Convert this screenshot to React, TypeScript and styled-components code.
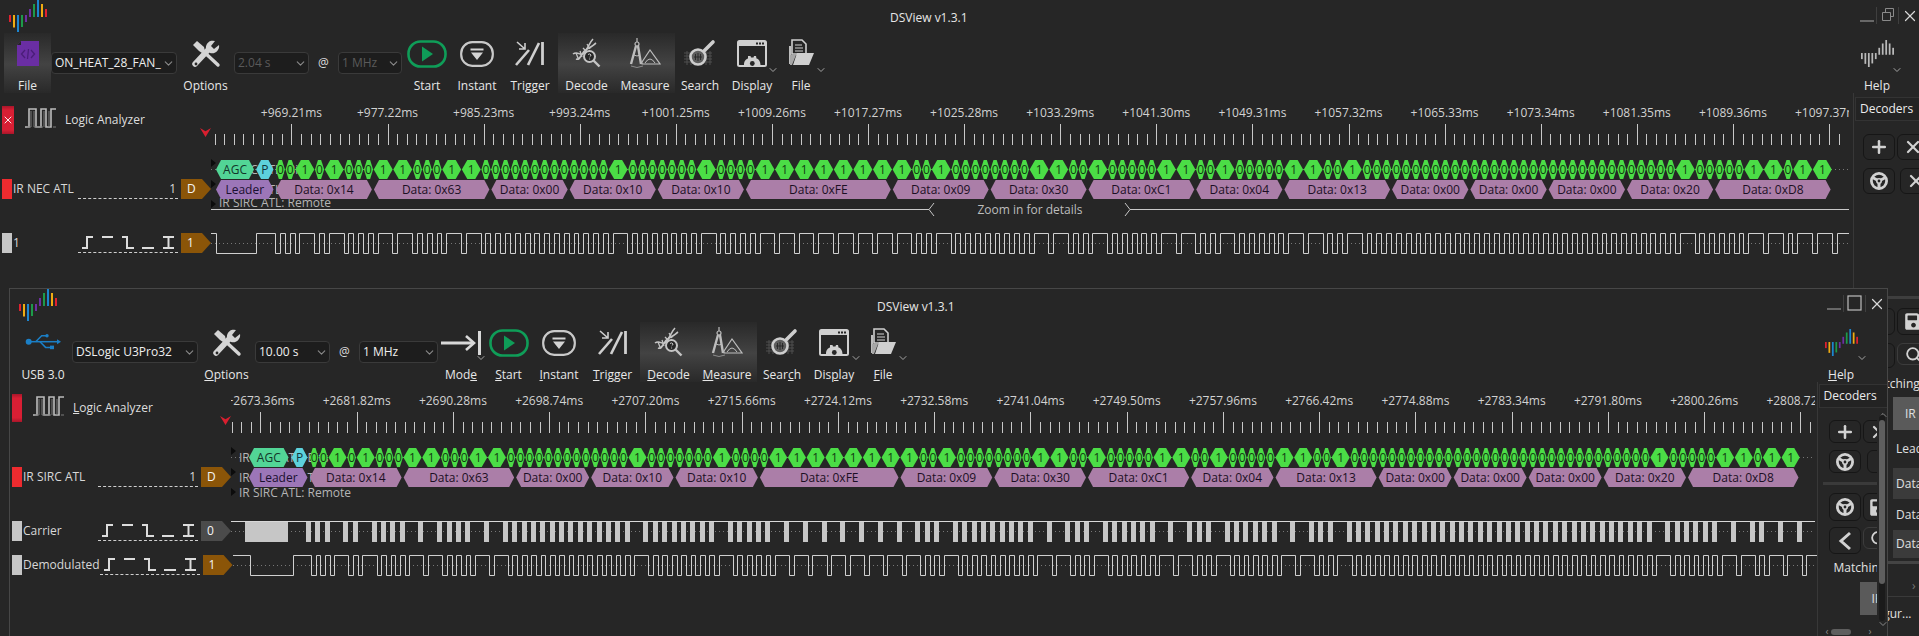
import { Fragment, type ReactNode } from 'react'
import styled, { createGlobalStyle } from 'styled-components'
import { FaSave } from 'react-icons/fa'
import { ChevronDown, Plus, Search as SearchGlass, X } from 'lucide-react'

const BG = '#262626'
const FONT = '"Open Sans", "Noto Sans", "Liberation Sans", sans-serif'

const BYTES = [0x14, 0x63, 0x00, 0x10, 0x10, 0xfe, 0x09, 0x30, 0xc1, 0x04, 0x13, 0x00, 0x00, 0x00, 0x20, 0xd8]

const hexName = (b: number) => `Data: 0x${b.toString(16).toUpperCase().padStart(2, '0')}`

type Bit = { x: number; w: number; v: number }
type Seg = { x: number; w: number; b: number }

function layout(start: number, w0: number) {
  const bits: Bit[] = []
  const segs: Seg[] = []
  let x = start
  for (const b of BYTES) {
    const s = x
    for (let i = 0; i < 8; i++) {
      const v = (b >> i) & 1
      const w = v ? w0 * 2 : w0
      bits.push({ x, w, v })
      x += w
    }
    segs.push({ x: s, w: x - s, b })
  }
  return { bits, segs, end: x }
}

type Timing = {
  origin: number
  right: number
  lowStart: number
  lowEnd: number
  agc: [number, number]
  p: [number, number]
  bitStart: number
  w0: number
}

const lowSpans = (t: Timing): [number, number][] => {
  const { bits, end } = layout(t.bitStart, t.w0)
  const spans: [number, number][] = [[t.lowStart, t.lowEnd]]
  for (const b of bits) spans.push([b.x - 0.5, b.x - 0.5 + t.w0 / 2])
  spans.push([end - 0.5, end - 0.5 + t.w0 / 2])
  return spans
}

const px = (v: number) => Math.round(v) + 0.5

function wavePath(t: Timing) {
  let d = `M0 0.5`
  for (const [a, b] of lowSpans(t)) {
    d += `H${px(a - t.origin)}V20.5H${px(b - t.origin)}V0.5`
  }
  return d + `H${t.right - t.origin}`
}

const hexPts = (x0: number, x1: number, y0: number, y1: number, ins: number) => {
  const m = (y0 + y1) / 2
  return `${x0},${m} ${x0 + ins},${y0} ${x1 - ins},${y0} ${x1},${m} ${x1 - ins},${y1} ${x0 + ins},${y1}`
}

const GlobalStyle = createGlobalStyle`
  html, body { margin: 0; padding: 0; background: ${BG}; overflow: hidden; }
  #root { width: 1919px; height: 636px; }
`

const Desktop = styled.div`
  position: relative;
  width: 1919px;
  height: 636px;
  overflow: hidden;
  background: ${BG};
  color: #e4e4e4;
  font: 12px/16px ${FONT};
`

const Window = styled.section<{ $x: number; $y: number; $w: number; $h: number; $framed?: boolean }>`
  position: absolute;
  left: ${p => p.$x}px;
  top: ${p => p.$y}px;
  width: ${p => p.$w}px;
  height: ${p => p.$h}px;
  display: flex;
  flex-direction: column;
  box-sizing: border-box;
  overflow: hidden;
  background: ${BG};
  border: ${p => (p.$framed ? '1px solid #474747' : '0')};
  border-bottom: 0;
`

const TitleBar = styled.header`
  flex: 0 0 33px;
  display: flex;
  align-items: flex-start;
  padding-left: 9px;
`

const Title = styled.div<{ $ml: number }>`
  margin-left: ${p => p.$ml}px;
  margin-top: 10px;
  font-size: 12px;
  color: #e6e6e6;
  white-space: nowrap;
`

const WinControls = styled.div<{ $mt: number; $mr: number }>`
  margin-left: auto;
  margin-top: ${p => p.$mt}px;
  margin-right: ${p => p.$mr}px;
  display: flex;
  align-items: flex-start;
  color: #c9c9c9;
`

const WinSep = styled.div`
  width: 1px;
  height: 17px;
  margin: 0 2px;
  background: #3f3f3f;
`

const Toolbar = styled.div`
  flex: 0 0 60px;
  display: flex;
  align-items: flex-start;
`

const ToolCell = styled.div<{ $w: number; $selected?: boolean; $ml?: number; $mr?: number }>`
  position: relative;
  flex: 0 0 ${p => p.$w}px;
  width: ${p => p.$w}px;
  height: 60px;
  margin-left: ${p => p.$ml ?? 0}px;
  margin-right: ${p => p.$mr ?? 0}px;
  display: flex;
  flex-direction: column;
  align-items: center;
  background: ${p => (p.$selected ? 'linear-gradient(#292929, #434343 52%, #292929)' : 'none')};
`

const ToolGroup = styled.div`
  display: flex;
  background: linear-gradient(#292929, #434343 52%, #292929);
`

const IconSlot = styled.div`
  height: 41px;
  display: flex;
  align-items: center;
  justify-content: center;
`

const ToolLabel = styled.div<{ $low?: boolean }>`
  margin-top: ${p => (p.$low ? 6 : 4)}px;
  white-space: nowrap;
  color: #e8e8e8;
  line-height: 15px;
`

const Caret = styled(ChevronDown)<{ $top: number; $left: number }>`
  position: absolute;
  top: ${p => p.$top}px;
  left: ${p => p.$left}px;
  color: #a4a4a4;
`

const Combo = styled.div<{ $w: number; $off?: boolean }>`
  flex: 0 0 ${p => p.$w}px;
  box-sizing: border-box;
  height: 22px;
  margin-top: 19px;
  padding: 0 1px 0 3px;
  display: flex;
  align-items: center;
  justify-content: space-between;
  overflow: hidden;
  background: #1d1d1d;
  border: 1px solid #3a3a3a;
  border-radius: 4px;
  color: ${p => (p.$off ? '#5a5a5a' : '#efefef')};
  white-space: nowrap;
  svg {
    flex: 0 0 13px;
    color: #8a8a8a;
  }
`

const At = styled.div`
  flex: 0 0 29px;
  margin-top: 22px;
  text-align: center;
  color: #dcdcdc;
`

const Body = styled.div`
  flex: 1;
  min-height: 0;
  display: flex;
`

const Main = styled.div<{ $w: number }>`
  flex: 0 0 ${p => p.$w}px;
  display: flex;
  flex-direction: column;
  gap: 14px;
`

const RulerRow = styled.div`
  display: flex;
`

const RulerHead = styled.div<{ $w: number }>`
  flex: 0 0 ${p => p.$w}px;
  box-sizing: border-box;
  display: flex;
  align-items: flex-end;
  padding-left: 2px;
`

const RulerSwatch = styled.div`
  position: relative;
  flex: 0 0 10px;
  height: 28px;
  margin-bottom: 11px;
  background: linear-gradient(#a8162a, #d91f34 15%, #d91f34 85%, #a8162a);
  display: flex;
  align-items: center;
  justify-content: center;
  color: #fff;
`

const ModeText = styled.div`
  margin-left: 8px;
  margin-bottom: 17px;
  color: #dedede;
  white-space: nowrap;
`

const ModeWave = styled.svg`
  margin-left: 10px;
  margin-bottom: 17px;
  flex-shrink: 0;
`

const Marker = styled.div`
  margin-left: auto;
  margin-bottom: 8px;
  width: 11px;
  height: 9px;
  background: #d81f2f;
  clip-path: polygon(0 0, 50% 35%, 100% 0, 50% 100%);
`

const Plot = styled.svg`
  display: block;
  flex-shrink: 0;
  font-family: ${FONT};
`

const ChannelRow = styled.div<{ $h: number }>`
  display: flex;
  height: ${p => p.$h}px;
`

const ChannelHead = styled.div<{ $w: number }>`
  flex: 0 0 ${p => p.$w}px;
  box-sizing: border-box;
  padding-left: 2px;
  display: flex;
  align-items: center;
`

const Swatch = styled.div<{ $color: string }>`
  flex: 0 0 10px;
  height: 20px;
  background: ${p => p.$color};
`

const ChannelName = styled.div`
  flex: 1;
  min-width: 0;
  margin-left: 1px;
  color: #d8d8d8;
  white-space: nowrap;
`

const TriggerBox = styled.div`
  flex: 0 0 100px;
  box-sizing: border-box;
  height: 20px;
  border-bottom: 1px dashed #cfcfcf;
  text-align: right;
  padding-right: 2px;
  color: #d8d8d8;
  line-height: 19px;
`

const Tag = styled.div<{ $color: string }>`
  flex: 0 0 30px;
  height: 20px;
  margin-left: 3px;
  padding-left: 6px;
  box-sizing: border-box;
  line-height: 20px;
  color: #f5f5f5;
  background: ${p => p.$color};
  clip-path: polygon(0 0, 21px 0, 100% 50%, 21px 100%, 0 100%);
`

const Dock = styled.aside<{ $ml: number }>`
  flex: 1;
  min-width: 0;
  margin-left: ${p => p.$ml}px;
  border-left: 1px solid #383838;
  position: relative;
  display: flex;
  flex-direction: column;
`

const DockTab = styled.div<{ $mt: number; $h: number }>`
  flex: 0 0 ${p => p.$h}px;
  margin-top: ${p => p.$mt}px;
  margin-left: 1px;
  box-sizing: border-box;
  padding-left: 4px;
  background: #232323;
  border: 1px solid #333;
  border-right: 0;
  line-height: ${p => p.$h - 2}px;
  color: #ececec;
`

const DockInner = styled.div<{ $clip?: number }>`
  flex: 1;
  min-height: 0;
  width: ${p => (p.$clip ? `${p.$clip}px` : 'auto')};
  overflow: hidden;
  display: flex;
  flex-direction: column;
`

const BtnRow = styled.div<{ $mt: number; $ml: number; $gap?: number }>`
  flex-shrink: 0;
  display: flex;
  margin-top: ${p => p.$mt}px;
  margin-left: ${p => p.$ml}px;
  gap: ${p => p.$gap ?? 2}px;
`

const IconBtn = styled.div<{ $h: number; $soft?: boolean }>`
  flex: 0 0 32px;
  height: ${p => p.$h}px;
  box-sizing: border-box;
  border: 1px solid ${p => (p.$soft ? '#3c3c3c' : '#161616')};
  border-radius: 6px;
  display: flex;
  align-items: center;
  justify-content: center;
  color: #d2d2d2;
`

const DockBar = styled.div<{ $mt: number; $ml?: number; $c?: string; $h?: number }>`
  flex: 0 0 ${p => p.$h ?? 3}px;
  margin-top: ${p => p.$mt}px;
  margin-left: ${p => p.$ml ?? 0}px;
  background: ${p => p.$c ?? '#3a3a3a'};
`

const DockText = styled.div<{ $mt: number; $ml: number; $dim?: boolean }>`
  flex-shrink: 0;
  margin-top: ${p => p.$mt}px;
  margin-left: ${p => p.$ml}px;
  white-space: nowrap;
  line-height: ${p => (p.$dim ? 12 : 16)}px;
  color: ${p => (p.$dim ? '#777' : '#e2e2e2')};
`

const MatchRow = styled.div<{ $h: number; $ml: number; $c?: string; $center?: boolean; $w?: number; $mt?: number }>`
  flex: 0 0 ${p => p.$h}px;
  width: ${p => p.$w ?? 60}px;
  margin-left: ${p => p.$ml}px;
  margin-top: ${p => p.$mt ?? 0}px;
  padding-left: ${p => (p.$center ? 12 : 3)}px;
  display: flex;
  align-items: center;
  background: ${p => p.$c ?? 'none'};
  color: #e0e0e0;
  white-space: nowrap;
  box-sizing: border-box;
`

const VScroll = styled.div`
  position: absolute;
  left: 61px;
  top: 33px;
  bottom: 15px;
  width: 6px;
  border-radius: 3px;
  background: #1b1b1b;
`

const VThumb = styled.div`
  position: absolute;
  left: 0;
  right: 0;
  top: 5px;
  height: 164px;
  border-radius: 3px;
  background: #5e5e5e;
`

const HScroll = styled.div`
  position: absolute;
  left: 8px;
  bottom: 0;
  width: 46px;
  height: 9px;
  display: flex;
  align-items: center;
  justify-content: space-between;
  color: #8a8a8a;
  font-size: 10px;
  line-height: 9px;
`

const HThumb = styled.div`
  width: 20px;
  height: 6px;
  margin-right: 16px;
  border-radius: 3px;
  background: #5e5e5e;
`

const ScrollArrow = styled(ChevronDown)<{ $top?: number; $bottom?: number; $up?: boolean }>`
  position: absolute;
  left: 59px;
  top: ${p => (p.$top === undefined ? 'auto' : `${p.$top}px`)};
  bottom: ${p => (p.$bottom === undefined ? 'auto' : `${p.$bottom}px`)};
  transform: ${p => (p.$up ? 'rotate(180deg)' : 'none')};
  color: #8a8a8a;
`

const Hot = styled.span`
  text-decoration: underline;
`

// letter at index `at` carries the mnemonic underline
function Mnemonic({ text, at }: { text: string; at?: number }) {
  if (at === undefined) return <>{text}</>
  return (
    <>
      {text.slice(0, at)}
      <Hot>{text[at]}</Hot>
      {text.slice(at + 1)}
    </>
  )
}

const LOGO_COLORS = ['#e0212f', '#f0ac12', '#1c86d0', '#1d9a4a', '#6e2fa3', '#6e2fa3', '#1d9a4a', '#1c86d0', '#f0ac12', '#e0212f']
const LOGO_BARS: [number, number][] = [
  [15, 7],
  [15, 12.5],
  [15, 17],
  [15, 12],
  [15, 7],
  [9, 8],
  [4, 13],
  [0, 17],
  [4, 13],
  [9, 8]
]

function Logo({ size, mono }: { size: number; mono?: boolean }) {
  return (
    <svg width={size} height={(size * 32) / 38} viewBox="0 0 38 32">
      {LOGO_BARS.map(([y, h], i) => (
        <rect key={i} x={i * 4} y={y} width={2} height={h} fill={mono ? '#b9b9b9' : LOGO_COLORS[i]} />
      ))}
    </svg>
  )
}

function UsbGlyph() {
  return (
    <svg width="36" height="18" viewBox="0 0 36 18" fill="none" stroke="#1b7fc6" strokeWidth="1.5">
      <circle cx="3.7" cy="7.7" r="3" fill="#1b7fc6" stroke="none" />
      <path d="M4 7.7 H32" />
      <path d="M32 5.2 L36 7.7 L32 10.2Z" fill="#1b7fc6" stroke="none" />
      <path d="M10.7 7.7 L16.7 1.7 H21" />
      <circle cx="22" cy="1.8" r="1.7" fill="#1b7fc6" stroke="none" />
      <path d="M15 7.7 L20.6 13.4 H25" />
      <rect x="25" y="11.6" width="4" height="3.6" fill="#1b7fc6" stroke="none" />
    </svg>
  )
}

function Tools() {
  return (
    <svg width="30" height="30" viewBox="0 0 30 30" fill="#d4d4d4">
      <path d="M2 6 L6 2 L13 8 L14 12 L11 14 L8 12Z" />
      <path d="M12 12 L27 26" stroke="#d4d4d4" strokeWidth="3.4" strokeLinecap="round" />
      <path d="M4 25 L18 10" stroke="#d4d4d4" strokeWidth="5.5" strokeLinecap="round" />
      <path d="M15 10 A7 7 0 0 1 24 2 L20 7 L23 10 L28 6 A7 7 0 0 1 19 14Z" />
      <circle cx="5" cy="25" r="1.4" fill={BG} />
    </svg>
  )
}

function PlayPill() {
  return (
    <svg width="40" height="28" viewBox="0 0 40 28">
      <rect x="1.5" y="1.5" width="37" height="25" rx="12" fill="none" stroke="#0f9d58" strokeWidth="2.6" />
      <path d="M15 6.5 L26 14 L15 21.5Z" fill="#0f9d58" />
    </svg>
  )
}

function InstantPill() {
  return (
    <svg width="34" height="26" viewBox="0 0 34 26">
      <rect x="1.2" y="1.2" width="31.6" height="23.6" rx="11" fill="none" stroke="#c9c9c9" strokeWidth="2.2" />
      <path d="M10.5 7.5 H23.5 V9.5 H10.5Z M11 11.5 H23 L17 19Z" fill="#d4d4d4" />
    </svg>
  )
}

function TriggerIcon() {
  return (
    <svg width="30" height="26" viewBox="0 0 30 26" stroke="#cfcfcf" fill="none">
      <path d="M2 1 L10 8 M4 8 H10 V2" strokeWidth="1.6" />
      <path d="M1 24 L14 9" strokeWidth="2.6" />
      <path d="M13 24 L24 2" strokeWidth="2.6" />
      <path d="M27.5 1 V24" strokeWidth="2.8" />
    </svg>
  )
}

function ModeIcon() {
  return (
    <svg width="40" height="24" viewBox="0 0 40 24" stroke="#d8d8d8" fill="none">
      <path d="M0 12 H32" strokeWidth="3" />
      <path d="M25 5 L33 12 L25 19" strokeWidth="2.6" />
      <path d="M38.5 0 V24" strokeWidth="3" />
    </svg>
  )
}

function DecodeIcon() {
  return (
    <svg width="30" height="30" viewBox="0 0 30 30" fill="none" stroke="#c4c4c4">
      <path d="M1 16 C6 12 9 20 13 14 S18 4 21 1" strokeWidth="1.6" />
      <path d="M4 21 C9 23 9 14 15 11 S20 8 24 5" strokeWidth="1.6" />
      <path d="M4 15 L6 20 M8 13 L10 19 M11 10 L15 14 M15 6 L18 11" strokeWidth="1.3" />
      <circle cx="17.5" cy="18.5" r="5.5" strokeWidth="2" fill={BG} />
      <path d="M21.5 22.5 L27.5 28.5" strokeWidth="2.4" />
      <path d="M16 16.5 Q18 15 19 17 Q19 18 17.6 19 M17.6 20.5 V21.5" strokeWidth="1" />
    </svg>
  )
}

function MeasureIcon() {
  return (
    <svg width="32" height="32" viewBox="0 0 32 32" fill="none" stroke="#bdbdbd">
      <path d="M8 1 V5" strokeWidth="1.2" />
      <circle cx="8" cy="7" r="2" strokeWidth="1.2" />
      <path d="M7 9 L2 27 M9 9 L12 27" strokeWidth="2.4" />
      <path d="M5 18 Q8 20 11 18" strokeWidth="1" />
      <path d="M13 25 L21 13 L31 27 H13Z" strokeWidth="1.2" />
      <path d="M16 26 Q21 18 26 26" strokeWidth="1" />
      <path d="M2 29 Q8 32 14 29" strokeWidth="1" stroke="#8b8b8b" />
    </svg>
  )
}

function SearchIcon() {
  return (
    <svg width="32" height="30" viewBox="0 0 32 30" fill="none">
      <g stroke="#4f4f4f" strokeWidth="1">
        <path d="M0 14 H28 M0 17 H28 M0 20 H28 M0 23 H28 M3 12 V26 M7 12 V26 M22 12 V26 M26 12 V26" />
      </g>
      <circle cx="14" cy="18" r="7.5" fill="#5d5d5d" stroke="#cdcdcd" strokeWidth="2.6" />
      <path d="M10 18 H18 M14 14 V22 M11.5 15 V21 M16.5 15 V21" stroke="#262626" strokeWidth="0.9" />
      <path d="M20 12 L29 3" stroke="#cdcdcd" strokeWidth="3.6" strokeLinecap="round" />
    </svg>
  )
}

function DisplayIcon() {
  return (
    <svg width="30" height="28" viewBox="0 0 30 28">
      <rect x="1" y="1" width="28" height="25" rx="1.5" fill="none" stroke="#d0d0d0" strokeWidth="2" />
      <rect x="1" y="1" width="28" height="5" fill="#d0d0d0" />
      <path d="M19 2.5 h2 v2 h-2z M22 2.5 h2 v2 h-2z M25 2.5 h2 v2 h-2z" fill={BG} />
      <path
        d="M7 25 C7 21 9 19 11 18.5 L11 16 H13.5 L14 17.5 H16.5 L17 16 H19 L19.5 18.5 C22 19 23.5 22 23.5 25Z"
        fill="#d0d0d0"
      />
      <circle cx="15.3" cy="23.5" r="2.4" fill={BG} />
    </svg>
  )
}

function FolderIcon() {
  return (
    <svg width="28" height="30" viewBox="0 0 28 30">
      <path d="M2 7 V25 H4 V7Z" fill="#bdbdbd" />
      <path d="M5 1 H15 L19 5 V15 H5Z" fill="none" stroke="#cfcfcf" strokeWidth="1.6" />
      <path d="M8 6 H15 M8 9 H16 M8 12 H16" stroke="#cfcfcf" strokeWidth="1.2" />
      <path d="M6 26 L10 14 H27 L22 26Z" fill="#cfcfcf" />
      <path d="M3 26 V16 H9 L5 26Z" fill="#a6a6a6" />
    </svg>
  )
}

function PurpleFile() {
  return (
    <svg width="22" height="25" viewBox="0 0 22 25">
      <path d="M4 0 H22 V25 H0 V4Z" fill="#6a2ea3" />
      <path d="M0 4 H4 V0Z" fill={BG} />
      <path d="M8 9 L4.5 13 L8 17 M14 9 L17.5 13 L14 17" stroke="#4a1d78" strokeWidth="1.3" fill="none" />
      <path d="M11.5 8 L10.5 18" stroke="#4a1d78" strokeWidth="1.2" />
    </svg>
  )
}

function Wheel() {
  return (
    <svg width="20" height="20" viewBox="0 0 20 20" fill="none" stroke="#d2d2d2">
      <circle cx="10" cy="10" r="7.6" strokeWidth="2.8" />
      <path d="M10 10 L10 17 M10 10 L3.6 6.5 M10 10 L16.4 6.5" strokeWidth="3" />
      <circle cx="10" cy="10" r="2.2" fill={BG} strokeWidth="1.6" />
    </svg>
  )
}

function BackArrow() {
  return (
    <svg width="14" height="20" viewBox="0 0 14 20" fill="none">
      <path d="M12 2 L3 10 L12 18" stroke="#d2d2d2" strokeWidth="3" />
    </svg>
  )
}

function ModeWaveGlyph() {
  return (
    <ModeWave width="33" height="20" viewBox="0 0 33 20" fill="none" stroke="#bcbcbc" strokeWidth="1.6">
      <path d="M1 19 H5 V1 H12 V19 H17 V1 H22 V19 H27 V1 H32" />
      <path d="M3 19 H7 V3 M10 3 V19 H19 M20 3 V19 M25 3 V19 M29 19 H32" stroke="#7a7a7a" strokeWidth="1" />
    </ModeWave>
  )
}

function TriggerGlyphs() {
  return (
    <svg width="98" height="19" viewBox="0 0 98 19" fill="none" stroke="#dcdcdc" strokeWidth="2">
      <path d="M4 15 H9 V4 H15" />
      <path d="M24 4 H35" />
      <path d="M44 4 H49 V15 H56" />
      <path d="M64 15 H76" />
      <path d="M85 4 H96 M90.5 4 V15 M85 15 H96" />
    </svg>
  )
}

function MinimizeRestoreClose({ restore, minY }: { restore?: boolean; minY: number }) {
  return (
    <>
      <svg width="14" height="17" viewBox="0 0 14 17">
        <path d={`M0 ${minY} H14`} stroke="#aaa" strokeWidth="1" />
      </svg>
      <WinSep />
      <svg width="17" height="16" viewBox="0 0 17 16" fill="none" stroke={restore ? '#8a8a8a' : '#bdbdbd'}>
        {restore ? (
          <path d="M3.5 5.5 h8 v8 h-8z M6.5 5 V1.5 h8 v8 H12" />
        ) : (
          <rect x="2" y="1" width="13" height="14" strokeWidth="1.2" />
        )}
      </svg>
      <WinSep />
      <X size={18} strokeWidth={1.6} color="#d8d8d8" />
    </>
  )
}

type Cfg = {
  head: number
  origin: number
  right: number
  rulerH: number
  major0: number
  majorStep: number
  minor0: number
  minorEnd: number
  labels: string[]
  timing: Timing
}

function Ruler({ cfg }: { cfg: Cfg }) {
  const width = cfg.right - cfg.origin
  const h = cfg.rulerH
  const ticks: number[] = []
  for (let x = cfg.minor0; x <= cfg.minorEnd; x += cfg.majorStep / 10) ticks.push(x)
  return (
    <Plot width={width} height={h}>
      {ticks.map((x, i) => (
        <line
          key={i}
          x1={px(x - cfg.origin)}
          x2={px(x - cfg.origin)}
          y1={h - 11}
          y2={h}
          stroke="#c8c8c8"
        />
      ))}
      {cfg.labels.map((label, i) => {
        const x = cfg.major0 + i * cfg.majorStep - cfg.origin
        return (
          <Fragment key={label}>
            <line x1={px(x)} x2={px(x)} y1={h - 21} y2={h} stroke="#c8c8c8" />
            <text x={x} y={h - 28} textAnchor="middle" fontSize="12" fill="#d2d2d2">
              {label}
            </text>
          </Fragment>
        )
      })}
    </Plot>
  )
}

function DecodeTrack({ cfg, zoomBar, ghost }: { cfg: Cfg; zoomBar?: boolean; ghost: string[] }) {
  const t = cfg.timing
  const width = cfg.right - cfg.origin
  const o = t.origin
  const { bits, segs, end } = layout(t.bitStart, t.w0)
  const [a0, a1] = t.agc
  const [p0, p1] = t.p
  const triY = [4, 25, 45]
  return (
    <Plot width={width} height={60}>
      <line x1={0} x2={end - o + 16} y1={10.5} y2={10.5} stroke="#777" strokeDasharray="1 3" />
      {triY.map(y => (
        <path key={y} d={`M0 ${y - 4} L5 ${y} L0 ${y + 4}Z`} fill="#0c0c0c" />
      ))}
      <text x={8} y={15} fontSize="12" fill="#b5b5b5">
        {ghost[0]}
      </text>
      <text x={8} y={35} fontSize="12" fill="#b5b5b5">
        {ghost[1]}
      </text>
      <text x={8} y={zoomBar ? 48 : 50} fontSize="12" fill="#b5b5b5">
        IR SIRC ATL: Remote
      </text>
      <polygon points={hexPts(a0 - o, a1 - o, 1, 20, 5)} fill="#52d596" />
      <text x={(a0 + a1) / 2 - o} y={15} textAnchor="middle" fontSize="12" fill="#12352a">
        AGC
      </text>
      <polygon points={hexPts(p0 - o, p1 - o, 1, 20, 5)} fill="#5dd2dc" />
      <text x={(p0 + p1) / 2 - o} y={15} textAnchor="middle" fontSize="12" fill="#12353a">
        P
      </text>
      <polygon points={hexPts(a0 - o, p1 - o, 21, 40, 5)} fill="#9c76b8" />
      <text x={(a0 + p1) / 2 - o} y={35} textAnchor="middle" fontSize="12" fill="#1a1030">
        Leader
      </text>
      {bits.map((b, i) => (
        <Fragment key={i}>
          <polygon
            points={hexPts(b.x - o + 0.3, b.x + b.w - o - 0.3, 1, 20, b.v ? 5.5 : 3)}
            fill="#4bdd46"
          />
          <text x={b.x + b.w / 2 - o} y={15} textAnchor="middle" fontSize="12" fill="#123b12">
            {b.v}
          </text>
        </Fragment>
      ))}
      {segs.map((s, i) => (
        <Fragment key={i}>
          <polygon points={hexPts(s.x - o + 0.5, s.x + s.w - o - 1.5, 21, 40, 5)} fill="#ab7ea8" />
          <text x={s.x + s.w / 2 - o - 0.5} y={35} textAnchor="middle" fontSize="12" fill="#1c0f24">
            {hexName(s.b)}
          </text>
        </Fragment>
      ))}
      {zoomBar && (
        <>
          <path d={`M0 50.5 H${929 - o} M${1130 - o} 50.5 H${width}`} stroke="#c8c8c8" />
          <path d={`M${934 - o} 44 L${929 - o} 50.5 L${934 - o} 57`} stroke="#c8c8c8" fill="none" />
          <path d={`M${1125 - o} 44 L${1130 - o} 50.5 L${1125 - o} 57`} stroke="#c8c8c8" fill="none" />
          <text x={1030 - o} y={55} textAnchor="middle" fontSize="12" fill="#bdbdbd">
            Zoom in for details
          </text>
        </>
      )}
    </Plot>
  )
}

function WaveTrack({ cfg }: { cfg: Cfg }) {
  const t = cfg.timing
  const width = t.right - t.origin
  return (
    <Plot width={width} height={21}>
      <line x1={0} x2={width} y1={10.5} y2={10.5} stroke="#777" strokeDasharray="1 3" />
      <path d={wavePath(t)} fill="none" stroke="#d0d0d0" />
    </Plot>
  )
}

function CarrierTrack({ cfg }: { cfg: Cfg }) {
  const t = cfg.timing
  const o = t.origin
  const width = t.right - o
  return (
    <Plot width={width} height={21}>
      <line x1={0} x2={width} y1={10.5} y2={10.5} stroke="#777" strokeDasharray="1 3" />
      <line x1={0} x2={width} y1={0.5} y2={0.5} stroke="#d8d8d8" />
      {lowSpans(t).map(([a, b]) => (
        <rect key={a} x={Math.round(a - 3 - o)} y={1} width={Math.round(b - a)} height={20} fill="#c6c6c6" />
      ))}
    </Plot>
  )
}

function Channel({
  cfg,
  h,
  name,
  color,
  tag,
  tagColor,
  count,
  children
}: {
  cfg: Cfg
  h: number
  name: string
  color: string
  tag: string
  tagColor: string
  count?: string
  children: ReactNode
}) {
  return (
    <ChannelRow $h={h}>
      <ChannelHead $w={cfg.head}>
        <Swatch $color={color} />
        <ChannelName>{name}</ChannelName>
        <TriggerBox>{count ?? <TriggerGlyphs />}</TriggerBox>
        <Tag $color={tagColor}>{tag}</Tag>
      </ChannelHead>
      {children}
    </ChannelRow>
  )
}

function Tool({
  w,
  icon,
  label,
  at,
  low,
  caret,
  ml,
  mr,
  selected
}: {
  w: number
  icon: ReactNode
  label: string
  at?: number
  low?: boolean
  caret?: [number, number]
  ml?: number
  mr?: number
  selected?: boolean
}) {
  return (
    <ToolCell $w={w} $ml={ml} $mr={mr} $selected={selected}>
      <IconSlot>{icon}</IconSlot>
      <ToolLabel $low={low}>
        <Mnemonic text={label} at={at} />
      </ToolLabel>
      {caret && <Caret size={12} $left={caret[0]} $top={caret[1]} />}
    </ToolCell>
  )
}

const BROWN = '#8b5508'
const RED = '#ee2b2f'
const GREY = '#c6c6c6'

const labelsA = Array.from({ length: 17 }, (_, i) => `+${(969.21 + i * 8.01).toFixed(2)}ms`)
const labelsB = Array.from({ length: 17 }, (_, i) => `+${(2673.36 + i * 8.46).toFixed(2)}ms`)

const cfgA: Cfg = {
  head: 211,
  origin: 211,
  right: 1849,
  rulerH: 52,
  major0: 291.4,
  majorStep: 96.1,
  minor0: 214.6,
  minorEnd: 1842,
  labels: labelsA,
  timing: {
    origin: 211,
    right: 1849,
    lowStart: 215.7,
    lowEnd: 255.7,
    agc: [216, 254],
    p: [256, 273.5],
    bitStart: 275.5,
    w0: 9.79
  }
}

const cfgB: Cfg = {
  head: 221,
  origin: 231,
  right: 1815,
  rulerH: 51,
  major0: 260.4,
  majorStep: 96.25,
  minor0: 231.5,
  minorEnd: 1812,
  labels: labelsB,
  timing: {
    origin: 231,
    right: 1815,
    lowStart: 247.7,
    lowEnd: 290.7,
    agc: [249, 288.6],
    p: [291.5, 307.5],
    bitStart: 309.4,
    w0: 9.375
  }
}

function UpperWindow() {
  return (
    <Window $x={0} $y={0} $w={1919} $h={636}>
      <TitleBar>
        <Logo size={38} />
        <Title $ml={843}>DSView v1.3.1</Title>
        <WinControls $mt={7} $mr={0}>
          <MinimizeRestoreClose restore minY={14} />
        </WinControls>
      </TitleBar>
      <Toolbar>
        <Tool w={47} ml={4} selected icon={<PurpleFile />} label="File" />
        <Combo $w={126}>
          ON_HEAT_28_FAN_
          <ChevronDown size={13} />
        </Combo>
        <Tool w={57} icon={<Tools />} label="Options" />
        <Combo $w={75} $off>
          2.04 s
          <ChevronDown size={13} />
        </Combo>
        <At>@</At>
        <Combo $w={64} $off>
          1 MHz
          <ChevronDown size={13} />
        </Combo>
        <Tool w={50} icon={<PlayPill />} label="Start" />
        <Tool w={50} icon={<InstantPill />} label="Instant" />
        <Tool w={56} icon={<TriggerIcon />} label="Trigger" />
        <ToolGroup>
          <Tool w={57} low icon={<DecodeIcon />} label="Decode" />
          <Tool w={60} low icon={<MeasureIcon />} label="Measure" />
        </ToolGroup>
        <Tool w={50} icon={<SearchIcon />} label="Search" />
        <Tool w={54} icon={<DisplayIcon />} label="Display" caret={[42, 31]} />
        <Tool w={44} icon={<FolderIcon />} label="File" caret={[36, 31]} />
        <Tool w={40} ml={1034} mr={22} icon={<Logo size={33} mono />} label="Help" caret={[34, 31]} />
      </Toolbar>
      <Body>
        <Main $w={1850}>
          <RulerRow>
            <RulerHead $w={cfgA.head}>
              <RulerSwatch>
                <X size={12} strokeWidth={1.8} />
              </RulerSwatch>
              <ModeWaveGlyph />
              <ModeText>Logic Analyzer</ModeText>
              <Marker />
            </RulerHead>
            <Ruler cfg={cfgA} />
          </RulerRow>
          <Channel cfg={cfgA} h={60} name="IR NEC ATL" color={RED} tag="D" tagColor={BROWN} count="1">
            <DecodeTrack cfg={cfgA} zoomBar ghost={['IR SIRC ATL: Bits', 'IR SIRC ATL: Timing']} />
          </Channel>
          <Channel cfg={cfgA} h={20} name="1" color={GREY} tag="1" tagColor={BROWN}>
            <WaveTrack cfg={cfgA} />
          </Channel>
        </Main>
        <Dock $ml={3}>
          <DockTab $mt={4} $h={24}>
            Decoders
          </DockTab>
          <DockInner>
            <BtnRow $mt={13} $ml={9}>
              <IconBtn $h={26}>
                <Plus size={20} strokeWidth={3} />
              </IconBtn>
              <IconBtn $h={26}>
                <X size={20} strokeWidth={2.6} />
              </IconBtn>
            </BtnRow>
            <BtnRow $mt={8} $ml={9} $gap={5}>
              <IconBtn $h={26}>
                <Wheel />
              </IconBtn>
              <IconBtn $h={26}>
                <X size={20} strokeWidth={2.6} />
              </IconBtn>
            </BtnRow>
            <DockBar $mt={102} $c="#3e3e3e" />
            <BtnRow $mt={9} $ml={9}>
              <IconBtn $h={27}>
                <Wheel />
              </IconBtn>
              <IconBtn $h={27}>
                <FaSave size={19} />
              </IconBtn>
            </BtnRow>
            <BtnRow $mt={8} $ml={9}>
              <IconBtn $h={25}>
                <BackArrow />
              </IconBtn>
              <IconBtn $h={22} $soft>
                <SearchGlass size={17} strokeWidth={2.6} />
              </IconBtn>
            </BtnRow>
            <DockText $mt={8} $ml={14}>
              Matching
            </DockText>
            <MatchRow $h={33} $ml={39} $c="#5a5a5a" $center $mt={5}>
              IR
            </MatchRow>
            <MatchRow $h={38} $ml={39}>
              Leader
            </MatchRow>
            <MatchRow $h={31} $ml={39} $c="#3b3b3b">
              Data: 0x14
            </MatchRow>
            <MatchRow $h={31} $ml={39}>
              Data: 0x63
            </MatchRow>
            <MatchRow $h={28} $ml={39} $c="#3b3b3b">
              Data: 0x00
            </MatchRow>
            <DockBar $mt={3} $c="#444" />
            <DockText $mt={16} $ml={58} $dim>
              ›
            </DockText>
            <DockBar $mt={4} $c="#3a3a3a" $h={1} />
            <DockText $mt={9} $ml={0}>
              Configur...
            </DockText>
          </DockInner>
        </Dock>
      </Body>
    </Window>
  )
}

function LowerWindow() {
  return (
    <Window $x={9} $y={288} $w={1879} $h={348} $framed>
      <TitleBar>
        <Logo size={38} />
        <Title $ml={820}>DSView v1.3.1</Title>
        <WinControls $mt={6} $mr={1}>
          <MinimizeRestoreClose minY={14} />
        </WinControls>
      </TitleBar>
      <Toolbar>
        <Tool w={58} ml={4} icon={<UsbGlyph />} label="USB 3.0" />
        <Combo $w={126}>
          DSLogic U3Pro32
          <ChevronDown size={13} />
        </Combo>
        <Tool w={57} icon={<Tools />} label="Options" at={0} />
        <Combo $w={75}>
          10.00 s
          <ChevronDown size={13} />
        </Combo>
        <At>@</At>
        <Combo $w={79}>
          1 MHz
          <ChevronDown size={13} />
        </Combo>
        <Tool w={46} icon={<ModeIcon />} label="Mode" at={3} caret={[37, 30]} />
        <Tool w={49} icon={<PlayPill />} label="Start" at={0} />
        <Tool w={52} icon={<InstantPill />} label="Instant" at={0} />
        <Tool w={55} icon={<TriggerIcon />} label="Trigger" at={0} />
        <ToolGroup>
          <Tool w={57} low icon={<DecodeIcon />} label="Decode" at={0} />
          <Tool w={60} low icon={<MeasureIcon />} label="Measure" at={0} />
        </ToolGroup>
        <Tool w={50} icon={<SearchIcon />} label="Search" at={4} />
        <Tool w={54} icon={<DisplayIcon />} label="Display" at={3} caret={[43, 30]} />
        <Tool w={44} icon={<FolderIcon />} label="File" at={0} caret={[36, 30]} />
        <Tool w={40} ml={916} icon={<Logo size={33} />} label="Help" at={0} caret={[35, 30]} />
      </Toolbar>
      <Body>
        <Main $w={1806}>
          <RulerRow>
            <RulerHead $w={cfgB.head}>
              <RulerSwatch />
              <ModeWaveGlyph />
              <ModeText>
                <Mnemonic text="Logic Analyzer" at={0} />
              </ModeText>
              <Marker />
            </RulerHead>
            <Ruler cfg={cfgB} />
          </RulerRow>
          <Channel cfg={cfgB} h={60} name="IR SIRC ATL" color={RED} tag="D" tagColor={BROWN} count="1">
            <DecodeTrack cfg={cfgB} ghost={['IR SIRC ATL: Bits', 'IR SIRC ATL: Timing']} />
          </Channel>
          <Channel cfg={cfgB} h={20} name="Carrier" color={GREY} tag="0" tagColor="#4b4b4b">
            <CarrierTrack cfg={cfgB} />
          </Channel>
          <Channel cfg={cfgB} h={20} name="Demodulated" color={GREY} tag="1" tagColor={BROWN}>
            <WaveTrack cfg={cfgB} />
          </Channel>
        </Main>
        <Dock $ml={0}>
          <DockTab $mt={2} $h={24}>
            Decoders
          </DockTab>
          <DockInner $clip={59}>
            <BtnRow $mt={12} $ml={11}>
              <IconBtn $h={23}>
                <Plus size={20} strokeWidth={3} />
              </IconBtn>
              <IconBtn $h={23}>
                <X size={20} strokeWidth={2.6} />
              </IconBtn>
            </BtnRow>
            <BtnRow $mt={7} $ml={11} $gap={6}>
              <IconBtn $h={23}>
                <Wheel />
              </IconBtn>
              <IconBtn $h={23}>
                <X size={14} strokeWidth={2.6} />
              </IconBtn>
            </BtnRow>
            <DockBar $mt={9} $ml={5} />
            <BtnRow $mt={8} $ml={11}>
              <IconBtn $h={28}>
                <Wheel />
              </IconBtn>
              <IconBtn $h={28}>
                <FaSave size={19} />
              </IconBtn>
            </BtnRow>
            <BtnRow $mt={6} $ml={11}>
              <IconBtn $h={27}>
                <BackArrow />
              </IconBtn>
              <IconBtn $h={22} $soft>
                <SearchGlass size={17} strokeWidth={2.6} />
              </IconBtn>
            </BtnRow>
            <DockText $mt={6} $ml={16}>
              Matching
            </DockText>
            <MatchRow $h={33} $ml={42} $c="#5a5a5a" $center $mt={6}>
              IR
            </MatchRow>
          </DockInner>
          <ScrollArrow size={12} $top={27} $up />
          <VScroll>
            <VThumb />
          </VScroll>
          <ScrollArrow size={12} $bottom={6} />
          <HScroll>
            ‹
            <HThumb />›
          </HScroll>
        </Dock>
      </Body>
    </Window>
  )
}

export default function App() {
  return (
    <Desktop>
      <GlobalStyle />
      <UpperWindow />
      <LowerWindow />
    </Desktop>
  )
}
